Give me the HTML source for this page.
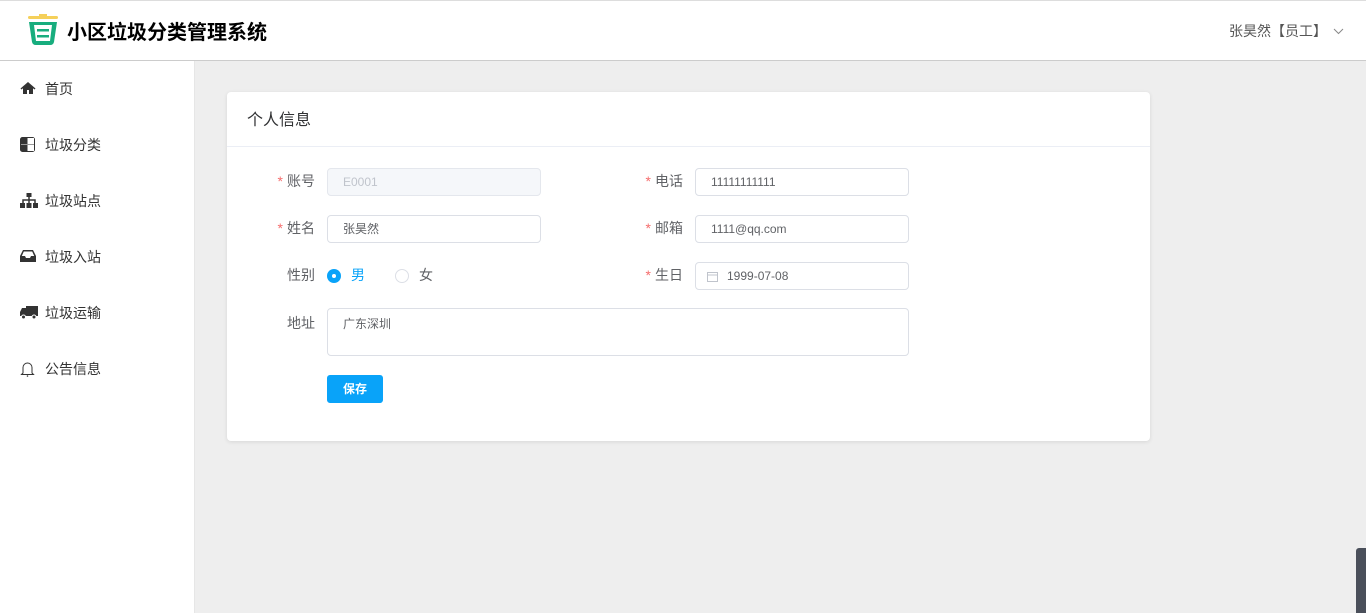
<!DOCTYPE html>
<html><head><meta charset="utf-8"><style>
*{box-sizing:border-box;margin:0;padding:0}
body{width:1366px;height:613px;overflow:hidden;background:#eee;font-family:"Liberation Sans","Noto Sans CJK SC",sans-serif;position:relative}
.hd{position:absolute;top:0;left:0;width:1366px;height:61px;background:#fff;border-top:1px solid #ddd;border-bottom:1px solid #ccc}
.title{position:absolute;left:67px;top:15px;font-size:20px;font-weight:bold;color:#000}
.user{position:absolute;left:1229px;top:20px;font-size:14px;color:#555}
.side{position:absolute;top:61px;left:0;width:195px;height:552px;background:#fff;border-right:1px solid #e6e6e6}
.mi{position:absolute;left:20px;font-size:14px;color:#333;height:20px;line-height:20px}
.mi svg{position:absolute;left:0;top:2px}
.mi span{position:absolute;left:25px;white-space:nowrap}
.card{position:absolute;left:227px;top:92px;width:923px;height:349px;background:#fff;border-radius:4px;box-shadow:0 1px 4px rgba(0,0,0,.1)}
.ct{height:55px;border-bottom:1px solid #ebeef5;padding:14px 20px;font-size:16px;color:#303133}
.lbl{position:absolute;font-size:14px;color:#606266;text-align:right;width:80px}
.lbl i{color:#f56c6c;font-style:normal;margin-right:4px}
.inp{position:absolute;height:28px;border:1px solid #dcdfe6;border-radius:4px;font-size:12px;color:#606266;padding:0 15px;line-height:26px;background:#fff}
.btn{position:absolute;left:100px;top:283px;width:56px;height:28px;background:#09a3f9;border-radius:3px;color:#fff;font-size:12px;font-weight:bold;text-align:center;line-height:28px}
</style></head><body>
<div class="hd">
<svg style="position:absolute;left:26px;top:13px" width="34" height="36" viewBox="0 0 34 36"><rect x="2" y="2" width="30" height="3" rx="1.5" fill="#f5d05a"/><rect x="13" y="0" width="8" height="3" fill="#f5d05a"/><path d="M3 8h28l-3 20a4 4 0 0 1-4 3H10a4 4 0 0 1-4-3z" fill="#18ad7e"/><path d="M8 11h18l-2 16H10z" fill="#fff"/><rect x="11" y="15" width="12" height="2.5" fill="#18ad7e"/><rect x="11" y="21" width="12" height="2.5" fill="#18ad7e"/></svg>
<div class="title">小区垃圾分类管理系统</div>
<div class="user">张昊然【员工】</div>
<svg style="position:absolute;left:1333px;top:27px" width="11" height="7" viewBox="0 0 11 7"><path d="M1 1l4.5 4.5L10 1" stroke="#888" fill="none"/></svg>
</div>
<div class="side">
<div class="mi" style="top:18px"><svg width="16" height="14" viewBox="0 0 16 14"><path d="M8 1L0.5 7.5l1 1L3 7.3V13h4V9h2v4h4V7.3l1.5 1.2 1-1z" fill="#333"/></svg><span>首页</span></div>
<div class="mi" style="top:74px"><svg width="15" height="15" viewBox="0 0 15 15"><rect x="0.5" y="0.5" width="14" height="14" rx="2" fill="#fff" stroke="#333"/><rect x="1" y="1" width="6.5" height="6.5" fill="#333"/><rect x="7.5" y="7.5" width="6.5" height="6.5" fill="#333"/><rect x="8" y="1" width="6" height="6" fill="#fff"/><rect x="1" y="8" width="6" height="6" fill="#333"/><rect x="8" y="8" width="6" height="6" fill="#fff"/></svg><span>垃圾分类</span></div>
<div class="mi" style="top:130px"><svg width="18" height="15" viewBox="0 0 18 15"><rect x="6.5" y="0" width="5" height="4" fill="#333"/><path d="M9 4v3M3 10V7h12v3M9 7v3" stroke="#333" stroke-width="1.5" fill="none"/><rect x="0" y="10" width="5" height="5" fill="#333"/><rect x="6.5" y="10" width="5" height="5" fill="#333"/><rect x="13" y="10" width="5" height="5" fill="#333"/></svg><span>垃圾站点</span></div>
<div class="mi" style="top:186px"><svg width="16" height="14" viewBox="0 0 16 14"><path d="M3 1h10l3 6v6H0V7z" fill="#333"/><path d="M3.8 2.5h8.4l2 4.5H11l-1 2H6l-1-2H1.8z" fill="#fff"/></svg><span>垃圾入站</span></div>
<div class="mi" style="top:242px"><svg width="18" height="15" viewBox="0 0 18 15"><rect x="6" y="1" width="12" height="10" fill="#333"/><path d="M0 7l2-4h4v8H0z" fill="#333"/><circle cx="3.5" cy="12" r="2" fill="#333" stroke="#fff"/><circle cx="14" cy="12" r="2" fill="#333" stroke="#fff"/></svg><span>垃圾运输</span></div>
<div class="mi" style="top:298px"><svg width="15" height="16" viewBox="0 0 15 16"><path d="M3 12V6.5a4.5 4.5 0 0 1 9 0V12l1.5 1.5h-12z" fill="none" stroke="#333"/><circle cx="7.5" cy="15" r="0.8" fill="#333"/></svg><span>公告信息</span></div>
</div>
<div class="card">
<div class="ct">个人信息</div>
<div class="lbl" style="left:8px;top:79px"><i>*</i>账号</div>
<div class="inp" style="left:100px;top:76px;width:214px;background:#f5f7fa;color:#c0c4cc;border-color:#e4e7ed">E0001</div>
<div class="lbl" style="left:376px;top:79px"><i>*</i>电话</div>
<div class="inp" style="left:468px;top:76px;width:214px">11111111111</div>
<div class="lbl" style="left:8px;top:126px"><i>*</i>姓名</div>
<div class="inp" style="left:100px;top:123px;width:214px">张昊然</div>
<div class="lbl" style="left:376px;top:126px"><i>*</i>邮箱</div>
<div class="inp" style="left:468px;top:123px;width:214px">1111@qq.com</div>
<div class="lbl" style="left:8px;top:173px">性别</div>
<div style="position:absolute;left:100px;top:177px;width:14px;height:14px;border-radius:50%;background:#09a3f9"><div style="position:absolute;left:5px;top:5px;width:4px;height:4px;border-radius:50%;background:#fff"></div></div>
<div style="position:absolute;left:124px;top:173px;font-size:14px;color:#09a3f9">男</div>
<div style="position:absolute;left:168px;top:177px;width:14px;height:14px;border-radius:50%;border:1px solid #dcdfe6"></div>
<div style="position:absolute;left:192px;top:173px;font-size:14px;color:#606266">女</div>
<div class="lbl" style="left:376px;top:173px"><i>*</i>生日</div>
<div class="inp" style="left:468px;top:170px;width:214px;padding-left:31px">1999-07-08</div>
<svg style="position:absolute;left:480px;top:179px" width="11" height="11" viewBox="0 0 11 11"><rect x="0.5" y="1.5" width="10" height="9" fill="none" stroke="#c0c4cc"/><path d="M0.5 4h10" stroke="#c0c4cc"/></svg>
<div class="lbl" style="left:8px;top:221px">地址</div>
<div class="inp" style="left:100px;top:216px;width:582px;height:48px;line-height:1;padding-top:9px">广东深圳</div>
<div class="btn">保存</div>
</div>
<div style="position:absolute;left:1356px;top:548px;width:10px;height:65px;background:#4a4f5a;border-radius:3px 0 0 0"></div>
</body></html>
